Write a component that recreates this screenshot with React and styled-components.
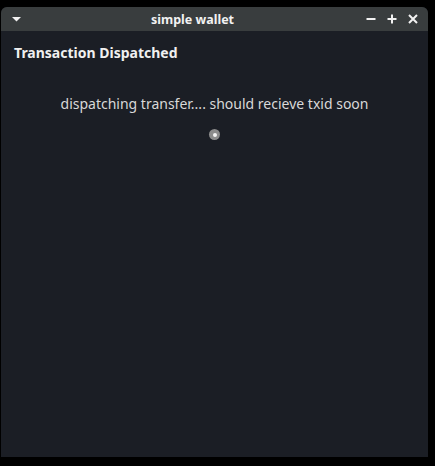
import React from "react";
import styled, { createGlobalStyle } from "styled-components";

const Global = createGlobalStyle`
  html, body { margin: 0; padding: 0; background: #000; }
  body { font-family: "Noto Sans", "Open Sans", sans-serif; }
`;

const Screen = styled.div`
  width: 435px;
  height: 466px;
  background: #000;
  padding: 7px 7px 9px 1px;
  box-sizing: border-box;
  display: flex;
`;

const Window = styled.div`
  flex: 1;
  display: flex;
  flex-direction: column;
  border-radius: 6px 6px 0 0;
  overflow: hidden;
  background: #1b1e25;
`;

const TitleBar = styled.div`
  height: 24px;
  background: #393d3e;
  display: flex;
  align-items: center;
  color: #f2f2f2;
`;

const Title = styled.div`
  flex: 1;
  text-align: center;
  font-weight: 700;
  font-size: 12.5px;
`;

const Controls = styled.div`
  width: 64px;
  display: flex;
  justify-content: flex-end;
  gap: 8px;
  padding-right: 8px;
  box-sizing: border-box;
`;

const CtrlBtn = styled.div`
  width: 14px;
  height: 14px;
  display: flex;
  align-items: center;
  justify-content: center;
`;

const MenuBtn = styled.div`
  width: 20px;
  padding-left: 11px;
  box-sizing: border-box;
  display: flex;
  align-items: center;
`;

const Body = styled.div`
  flex: 1;
  display: flex;
  flex-direction: column;
  padding: 12px 13px;
`;

const Heading = styled.div`
  font-weight: 700;
  font-size: 14px;
  color: #f0f0f0;
`;

const Message = styled.div`
  margin-top: 32px;
  text-align: center;
  font-size: 14px;
  color: #d8d8d8;
`;

const SpinnerRow = styled.div`
  margin-top: 16px;
  display: flex;
  justify-content: center;
`;

const Spinner = styled.div`
  width: 11px;
  height: 11px;
  border-radius: 50%;
  background: #8c8c8c;
  display: flex;
  align-items: center;
  justify-content: center;
  &::after {
    content: "";
    width: 4px;
    height: 4px;
    border-radius: 50%;
    background: #f4f4f4;
  }
`;

export default function App() {
  return (
    <>
      <Global />
      <Screen>
        <Window>
          <TitleBar>
            <MenuBtn>
              <svg width="9" height="5" viewBox="0 0 9 5">
                <polygon points="0,0 9,0 4.5,4.5" fill="#f2f2f2" />
              </svg>
            </MenuBtn>
            <Title>simple wallet</Title>
            <Controls>
              <CtrlBtn>
                <svg width="10" height="10" viewBox="0 0 10 10">
                  <rect x="0.5" y="4" width="9" height="2" fill="#f2f2f2" />
                </svg>
              </CtrlBtn>
              <CtrlBtn>
                <svg width="10" height="10" viewBox="0 0 10 10">
                  <rect x="0.5" y="4" width="9" height="2" fill="#f2f2f2" />
                  <rect x="4" y="0.5" width="2" height="9" fill="#f2f2f2" />
                </svg>
              </CtrlBtn>
              <CtrlBtn>
                <svg width="10" height="10" viewBox="0 0 10 10">
                  <path d="M1 1 L9 9 M9 1 L1 9" stroke="#f2f2f2" strokeWidth="2" />
                </svg>
              </CtrlBtn>
            </Controls>
          </TitleBar>
          <Body>
            <Heading>Transaction Dispatched</Heading>
            <Message>dispatching transfer.... should recieve txid soon</Message>
            <SpinnerRow>
              <Spinner />
            </SpinnerRow>
          </Body>
        </Window>
      </Screen>
    </>
  );
}
